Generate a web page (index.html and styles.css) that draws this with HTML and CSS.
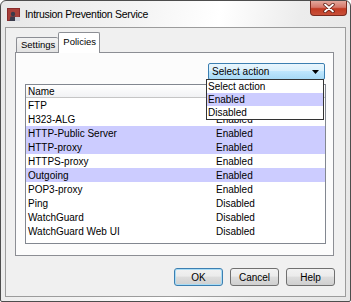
FILE: index.html
```html
<!DOCTYPE html>
<html>
<head>
<meta charset="utf-8">
<link rel="stylesheet" href="styles.css">
</head>
<body>
<div class="window">
  <div class="titlebar">
    <svg class="app-icon" width="13" height="13" viewBox="0 0 13 13">
      <rect x="0" y="0" width="13" height="13" fill="#8a2b2b"/>
      <rect x="1" y="1" width="11" height="11" fill="#a8403a"/>
      <circle cx="6" cy="6" r="2.2" fill="#3a3a4a"/>
      <path d="M2.5 13 L3.5 8.5 L8.5 8.5 L9.5 13 Z" fill="#3a3a4a"/>
      <rect x="8" y="9" width="5" height="4" fill="#d0d4dc"/>
    </svg>
    <span class="title">Intrusion Prevention Service</span>
    <div class="close-btn">
      <svg width="14" height="10" viewBox="0 0 14 10">
        <path d="M3 1.5 L11 8.5 M11 1.5 L3 8.5" stroke="#5a1a10" stroke-width="3.4" stroke-linecap="round"/>
        <path d="M3 1.5 L11 8.5 M11 1.5 L3 8.5" stroke="#ffffff" stroke-width="1.8" stroke-linecap="round"/>
      </svg>
    </div>
  </div>
  <div class="client">
    <div class="tabs">
      <div class="tab">Settings</div>
      <div class="tab active">Policies</div>
    </div>
    <div class="panel">
      <div class="combo-row">
        <div class="combo">
          <span>Select action</span>
          <svg width="7" height="4" viewBox="0 0 7 4"><path d="M0 0 H7 L3.5 4 Z" fill="#000"/></svg>
        </div>
      </div>
      <div class="table">
        <div class="thead"><div class="col-name">Name</div><div class="col-status"></div></div>
        <div class="row"><div class="col-name">FTP</div><div class="col-status">Enabled</div></div>
        <div class="row"><div class="col-name">H323-ALG</div><div class="col-status">Enabled</div></div>
        <div class="row sel"><div class="col-name">HTTP-Public Server</div><div class="col-status">Enabled</div></div>
        <div class="row sel"><div class="col-name">HTTP-proxy</div><div class="col-status">Enabled</div></div>
        <div class="row"><div class="col-name">HTTPS-proxy</div><div class="col-status">Enabled</div></div>
        <div class="row sel"><div class="col-name">Outgoing</div><div class="col-status">Enabled</div></div>
        <div class="row"><div class="col-name">POP3-proxy</div><div class="col-status">Enabled</div></div>
        <div class="row"><div class="col-name">Ping</div><div class="col-status">Disabled</div></div>
        <div class="row"><div class="col-name">WatchGuard</div><div class="col-status">Disabled</div></div>
        <div class="row"><div class="col-name">WatchGuard Web UI</div><div class="col-status">Disabled</div></div>
      </div>
      <div class="popup">
        <div class="opt">Select action</div>
        <div class="opt hl">Enabled</div>
        <div class="opt">Disabled</div>
      </div>
    </div>
    <div class="buttons">
      <div class="btn default">OK</div>
      <div class="btn">Cancel</div>
      <div class="btn">Help</div>
    </div>
  </div>
</div>
</body>
</html>
```
FILE: styles.css
```css
html, body {
  margin: 0;
  padding: 0;
  background: #ffffff;
}
body {
  width: 351px;
  height: 302px;
  font-family: "Liberation Sans", Arial, sans-serif;
  font-size: 10px;
  color: #000;
}
.window {
  box-sizing: border-box;
  width: 351px;
  height: 302px;
  border: 1px solid #4d4d4d;
  border-radius: 6px 6px 2px 2px;
  background: linear-gradient(100deg, #e8e8e8 0%, #f4f4f4 35%, #ffffff 55%, #ececec 75%, #e6e6e6 100%);
  padding: 0 4px 4px 4px;
  display: flex;
  flex-direction: column;
}
.titlebar {
  height: 26px;
  display: flex;
  align-items: center;
  position: relative;
  flex: none;
}
.app-icon {
  margin-left: 2px;
  margin-top: 1px;
}
.title {
  margin-left: 5px;
  font-size: 10.5px;
  color: #000;
  letter-spacing: -0.3px;
}
.close-btn {
  position: absolute;
  right: -1px;
  top: 0;
  width: 37px;
  height: 15px;
  box-sizing: border-box;
  border: 1px solid #7a2a1e;
  border-top: none;
  border-radius: 0 0 4px 4px;
  background: linear-gradient(#e3a89c 0%, #d6786a 45%, #c23a22 55%, #c8503a 100%);
  display: flex;
  align-items: center;
  justify-content: center;
}
.client {
  flex: 1;
  border: 1px solid #9c9c9c;
  background: #f0f0f0;
  display: flex;
  flex-direction: column;
  position: relative;
}
.tabs {
  display: flex;
  align-items: flex-end;
  padding: 4px 0 0 10px;
  height: 20px;
  position: relative;
  z-index: 1;
}
.tab {
  height: 15px;
  line-height: 14px;
  box-sizing: border-box;
  padding: 0 3px 0 4px;
  border: 1px solid #8c8e94;
  border-bottom: none;
  border-right: none;
  background: linear-gradient(#f3f3f3, #e3e3e3);
  font-size: 9.5px;
  border-radius: 2px 2px 0 0;
}
.tab.active {
  height: 21px;
  line-height: 18px;
  border-right: 1px solid #8c8e94;
  background: #ffffff;
  margin-bottom: -1px;
  padding: 0 3px 0 4px;
}
.panel {
  margin: 0 11px 0 9px;
  height: 204px;
  box-sizing: border-box;
  border: 1px solid #8c8e94;
  background: #fcfcfc;
  display: flex;
  flex-direction: column;
  position: relative;
}
.combo-row {
  display: flex;
  justify-content: flex-end;
  padding: 10px 8px 0 0;
}
.combo {
  width: 117px;
  height: 17px;
  box-sizing: border-box;
  border: 1px solid #3c7fb1;
  border-radius: 2px;
  background: linear-gradient(#eaf6fd 0%, #d9f0fc 45%, #bee6fd 50%, #a7d9f5 100%);
  display: flex;
  align-items: center;
  justify-content: space-between;
  padding: 0 5px 0 3px;
}
.table {
  margin: 4px 7px 11px 9px;
  flex: 1;
  border: 1px solid #828790;
  background: #ffffff;
}
.thead {
  height: 12px;
  display: flex;
  align-items: center;
  border-bottom: 1px solid #c5c5c5;
  background: linear-gradient(#ffffff, #f1f2f4);
}
.row {
  height: 14px;
  display: flex;
  align-items: center;
}
.row.sel {
  background: #ccccff;
}
.col-name {
  width: 187px;
  padding-left: 2px;
}
.col-status {
  padding-left: 1px;
}
.popup {
  position: absolute;
  left: 190px;
  top: 26px;
  width: 118px;
  height: 41px;
  box-sizing: border-box;
  border: 1px solid #333;
  background: #fff;
}
.opt {
  height: 13px;
  line-height: 13px;
  padding-left: 1px;
}
.opt.hl {
  background: #ccccff;
}
.buttons {
  display: flex;
  justify-content: flex-end;
  gap: 7px;
  padding: 12px 10px 0 0;
}
.btn {
  width: 49px;
  height: 18px;
  box-sizing: border-box;
  border: 1px solid #707070;
  border-radius: 3px;
  background: linear-gradient(#f2f2f2 0%, #ebebeb 45%, #dddddd 50%, #cfcfcf 100%);
  display: flex;
  align-items: center;
  justify-content: center;
}
.btn.default {
  border-color: #3c7fb1;
  box-shadow: inset 0 0 0 1px #a9dcf5;
}
```
